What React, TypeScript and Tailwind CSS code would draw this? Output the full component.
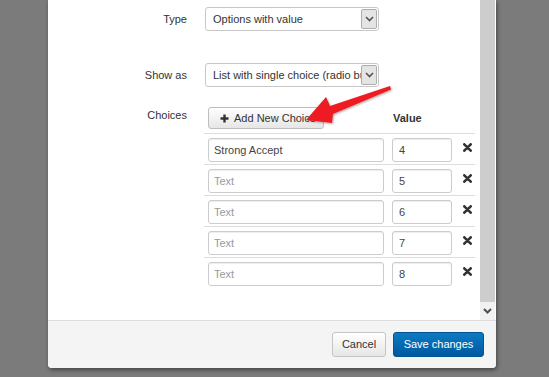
import React from "react";

const choices = [
  { text: "Strong Accept", value: "4" },
  { text: "", value: "5" },
  { text: "", value: "6" },
  { text: "", value: "7" },
  { text: "", value: "8" },
];

function Chevron({ className }: { className?: string }) {
  return (
    <svg width="9" height="6" viewBox="0 0 9 6" className={className}>
      <path d="M1 1l3.5 3.5L8 1" fill="none" stroke="#555" strokeWidth="1.6" />
    </svg>
  );
}

function FakeSelect({ label }: { label: string }) {
  return (
    <div className="ml-px flex h-[24px] w-[174px] items-stretch overflow-hidden rounded-[3px] border border-[#c8c8c8] bg-white">
      <div className="flex-1 overflow-hidden whitespace-nowrap pl-[7px] leading-[22px] text-[#333]">{label}</div>
      <div className="my-px mr-px flex w-[16px] items-center justify-center rounded-[2px] border border-[#adadad] bg-[#e4e4e4]">
        <Chevron />
      </div>
    </div>
  );
}

function RemoveIcon() {
  return (
    <svg width="9" height="9" viewBox="0 0 9 9">
      <path d="M1.3 1.3l6.4 6.4M7.7 1.3L1.3 7.7" stroke="#333" strokeWidth="2.6" strokeLinecap="round" />
    </svg>
  );
}

function PlusIcon() {
  return (
    <svg width="9" height="9" viewBox="0 0 9 9">
      <path d="M4.5 0.5v8M0.5 4.5h8" stroke="#333" strokeWidth="2.4" />
    </svg>
  );
}

const inputCls =
  "h-[24px] rounded-[3px] border border-[#cccccc] bg-white px-[5px] text-[11px] text-[#444] shadow-[inset_0_1px_1px_rgba(0,0,0,0.075)] outline-none placeholder:text-[#9a9a9a] font-['Liberation_Sans',Arial,sans-serif]";

export default function App() {
  return (
    <div className="relative h-[377px] w-[549px] overflow-hidden bg-[#7b7b7b] font-['Liberation_Sans',Arial,sans-serif] text-[11px] text-[#333]">
      <div className="ml-[48px] flex h-[368px] w-[448px] flex-col overflow-hidden rounded-b-[4px] bg-white shadow-[1px_2px_4px_rgba(0,0,0,0.45)]">
        <div className="flex h-[320px]">
          {/* form body */}
          <div className="flex-1 pt-[7px]">
            <div className="flex items-center gap-[17px]">
              <div className="w-[139px] text-right">Type</div>
              <FakeSelect label="Options with value" />
            </div>

            <div className="mt-[32px] flex items-center gap-[17px]">
              <div className="w-[139px] text-right">Show as</div>
              <FakeSelect label="List with single choice (radio buttons)" />
            </div>

            <div className="mt-[16px] flex items-start gap-[17px]">
              <div className="w-[139px] pt-[6px] text-right leading-[13px]">Choices</div>
              <div className="w-[271px]">
                <div className="grid grid-cols-[184px_68px_19px]">
                  <div className="p-[4px]">
                    <button className="flex h-[22px] w-[116px] items-center gap-[5px] rounded-[3px] border border-[#bdbdbd] bg-gradient-to-b from-white to-[#e6e6e6] pl-[11px] text-[11px] text-[#333]">
                      <PlusIcon />
                      <span>Add New Choice</span>
                    </button>
                  </div>
                  <div className="flex items-center pl-[5px] pt-[1px] font-bold">Value</div>
                  <div />
                </div>
                {choices.map((c, i) => (
                  <div key={i} className="grid grid-cols-[184px_68px_19px] border-t border-[#dddddd] pb-[2px] pt-[4px]">
                    <div className="pl-[4px]">
                      <input readOnly value={c.text} placeholder="Text" className={inputCls + " w-[176px]"} />
                    </div>
                    <div className="pl-[4px]">
                      <input readOnly value={c.value} className={inputCls + " w-[60px] pl-[6px]"} />
                    </div>
                    <div className="pl-[7px] pt-[5px]">
                      <RemoveIcon />
                    </div>
                  </div>
                ))}
              </div>
            </div>
          </div>

          {/* scrollbar */}
          <div className="flex w-[16px] flex-col pr-px">
            <div className="flex-1 bg-[#cdcdcd]" />
            <div className="flex h-[18px] items-center justify-center bg-[#f1f1f1]">
              <svg width="9" height="6" viewBox="0 0 9 6">
                <path d="M1 1l3.5 3.5L8 1" fill="none" stroke="#505050" strokeWidth="2" />
              </svg>
            </div>
          </div>
        </div>

        <div className="flex flex-1 justify-end gap-[7px] border-t border-[#dddddd] bg-[#f4f4f4] pr-[12px] pt-[11px]">
          <button className="h-[25px] w-[54px] rounded-[3px] border border-[#c4c4c4] bg-gradient-to-b from-white to-[#e6e6e6] text-[11px] text-[#333]">
            Cancel
          </button>
          <button className="h-[25px] w-[91px] rounded-[3px] border border-[#04548f] bg-gradient-to-b from-[#0c7bc4] to-[#0058a0] text-[11px] text-white">
            Save changes
          </button>
        </div>
      </div>

      {/* red annotation arrow */}
      <svg className="pointer-events-none absolute left-0 top-0" width="549" height="377" viewBox="0 0 549 377">
        <defs>
          <filter id="sh" x="-20%" y="-20%" width="140%" height="140%">
            <feDropShadow dx="1" dy="1" stdDeviation="1" floodColor="#000" floodOpacity="0.35" />
          </filter>
        </defs>
        <polygon
          points="390,86 330,106 326,97 306,120 332,123 333,114 391,89.5"
          fill="#ee1c24"
          filter="url(#sh)"
        />
      </svg>
    </div>
  );
}
